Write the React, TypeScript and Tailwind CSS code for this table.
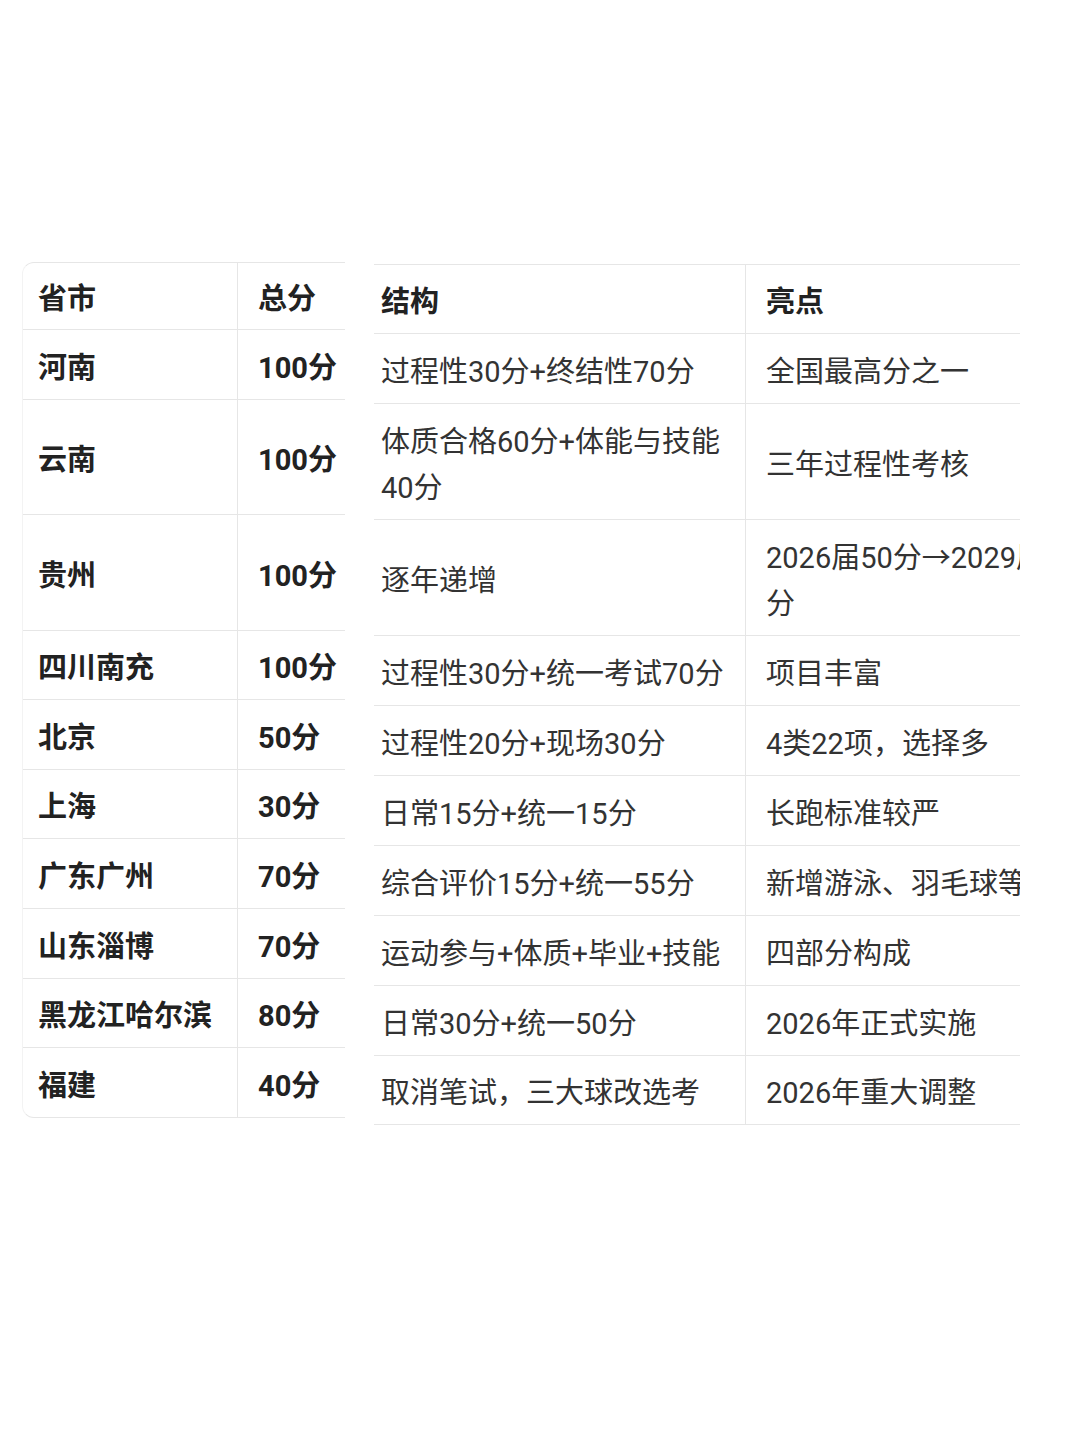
const leftRows = [
  { name: "河南", total: "100分", h: "h-[70px]" },
  { name: "云南", total: "100分", h: "h-[115px]" },
  { name: "贵州", total: "100分", h: "h-[116px]" },
  { name: "四川南充", total: "100分", h: "h-[69px]" },
  { name: "北京", total: "50分", h: "h-[70px]" },
  { name: "上海", total: "30分", h: "h-[69px]" },
  { name: "广东广州", total: "70分", h: "h-[70px]" },
  { name: "山东淄博", total: "70分", h: "h-[70px]" },
  { name: "黑龙江哈尔滨", total: "80分", h: "h-[69px]" },
  { name: "福建", total: "40分", h: "h-[69px]" },
];

const rightRows = [
  { structure: "过程性30分+终结性70分", highlight: "全国最高分之一", h: "h-[70px]" },
  { structure: "体质合格60分+体能与技能40分", highlight: "三年过程性考核", h: "h-[116px]" },
  { structure: "逐年递增", highlight: "2026届50分→2029届100分", h: "h-[116px]" },
  { structure: "过程性30分+统一考试70分", highlight: "项目丰富", h: "h-[70px]" },
  { structure: "过程性20分+现场30分", highlight: "4类22项，选择多", h: "h-[70px]" },
  { structure: "日常15分+统一15分", highlight: "长跑标准较严", h: "h-[70px]" },
  { structure: "综合评价15分+统一55分", highlight: "新增游泳、羽毛球等", h: "h-[70px]" },
  { structure: "运动参与+体质+毕业+技能", highlight: "四部分构成", h: "h-[70px]" },
  { structure: "日常30分+统一50分", highlight: "2026年正式实施", h: "h-[70px]" },
  { structure: "取消笔试，三大球改选考", highlight: "2026年重大调整", h: "h-[69px]" },
];

const font = "font-['Roboto','Noto_Sans_CJK_SC',sans-serif]";

export default function App() {
  return (
    <div className={`min-h-[1441px] w-[1080px] bg-white ${font} text-[29px] leading-[46px]`}>
      <div className="flex items-start pt-[262px]">
        {/* left: province + total */}
        <div className="ml-[22px] w-[323px] overflow-hidden rounded-l-[12px] border-y border-l border-y-[#e6e6e6] border-l-[#f3f3f3]">
          <div className="flex h-[67px] border-b border-[#e6e6e6] font-bold text-[#222]">
            <div className="flex w-[215px] items-center border-r border-[#e6e6e6] pl-[15px] pt-[5px]">省市</div>
            <div className="flex flex-1 items-center pl-[20px] pt-[5px]">总分</div>
          </div>
          {leftRows.map((r, i) => (
            <div
              key={r.name}
              className={`flex ${r.h} ${i < leftRows.length - 1 ? "border-b border-[#e6e6e6]" : ""} font-bold text-[#222]`}
            >
              <div className="flex w-[215px] items-center border-r border-[#e6e6e6] pl-[15px] pt-[6px]">{r.name}</div>
              <div className="flex flex-1 items-center pl-[20px] pt-[6px]">{r.total}</div>
            </div>
          ))}
        </div>

        {/* right: structure + highlight, clipped at the edge */}
        <div className="ml-[29px] mt-[2px] w-[646px] overflow-hidden">
          <div className="w-[752px]">
            <div className="flex h-[70px] border-y border-[#e6e6e6] font-bold text-[#222]">
              <div className="flex w-[372px] shrink-0 items-center border-r border-[#e6e6e6] pl-[7px] pt-[6px]">结构</div>
              <div className="flex w-[380px] shrink-0 items-center px-[20px] pt-[6px]">亮点</div>
            </div>
            {rightRows.map((r) => (
              <div key={r.structure} className={`flex ${r.h} border-b border-[#e6e6e6] text-[#333]`}>
                <div className="flex w-[372px] shrink-0 items-center border-r border-[#e6e6e6] pl-[7px] pr-[20px] pt-[6px]">
                  {r.structure}
                </div>
                <div className="flex w-[380px] shrink-0 items-center px-[20px] pt-[6px]">{r.highlight}</div>
              </div>
            ))}
          </div>
        </div>
      </div>
    </div>
  );
}
